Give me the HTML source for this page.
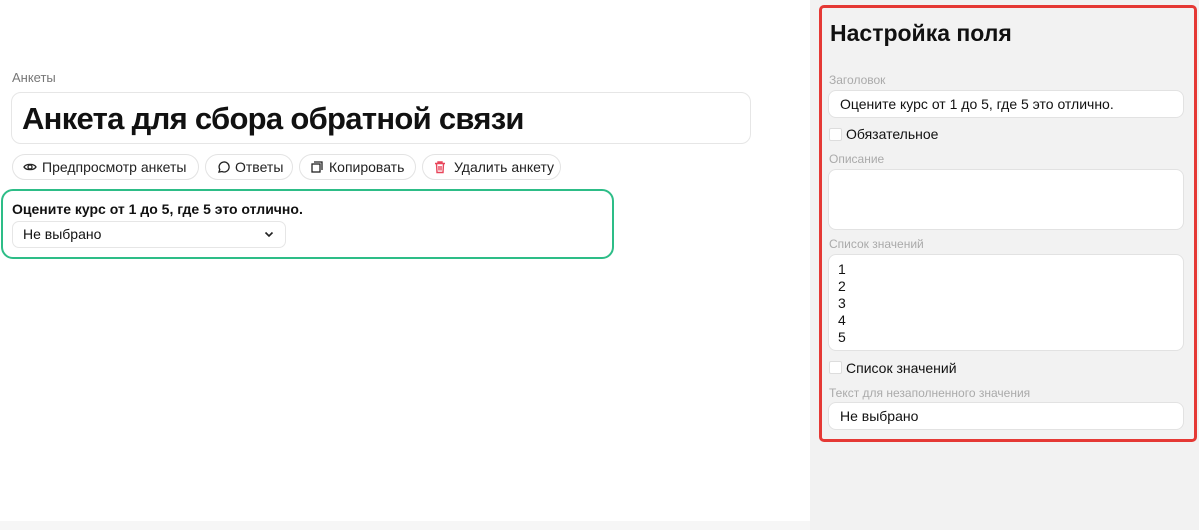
<!DOCTYPE html><html><head><meta charset="utf-8"><style>
*{box-sizing:border-box;margin:0;padding:0}
body{width:1199px;height:530px;background:#fff;font-family:"Liberation Sans","DejaVu Sans",sans-serif;position:relative;overflow:hidden;color:#111}
.a{position:absolute}
.btn{position:absolute;top:154px;height:26px;border:1px solid #e3e3e3;border-radius:13px;font-size:14px;line-height:24px;padding:0 10px;display:flex;align-items:center;gap:5px;color:#222;white-space:nowrap}
.btn svg{flex-shrink:0}
.lbl{position:absolute;left:829px;font-size:12px;color:#aaa}
.inp{position:absolute;left:828px;width:356px;background:#fff;border:1px solid #e2e2e2;border-radius:8px;font-size:14px;padding-left:11px}
.cb{position:absolute;left:829px;width:13px;height:13px;background:#fff;border:1px solid #ddd;border-radius:2px}
</style></head><body>
<div class="a" style="left:810px;top:0;width:389px;height:530px;background:#f2f2f2"></div>
<div class="a" style="left:0;top:521px;width:810px;height:9px;background:#f6f6f6"></div>
<div class="a" style="left:12px;top:70px;font-size:13px;color:#777">Анкеты</div>
<div class="a" style="left:11px;top:92px;width:740px;height:52px;border:1px solid #e6e6e6;border-radius:10px"></div>
<div class="a" style="left:22px;top:101px;font-size:31px;font-weight:bold;letter-spacing:-0.7px">Анкета для сбора обратной связи</div>
<div class="btn" style="left:12px;width:187px"><svg width="14" height="14" viewBox="0 0 14 14"><path d="M1 7C3 3.5 11 3.5 13 7C11 10.5 3 10.5 1 7Z" fill="none" stroke="#222" stroke-width="1.3"/><circle cx="7" cy="7" r="2" fill="none" stroke="#222" stroke-width="1.3"/></svg>Предпросмотр анкеты</div>
<div class="btn" style="left:205px;width:88px"><svg width="14" height="14" viewBox="0 0 14 14"><path d="M3 12L3.8 9.5A5 5 0 1 1 6 11.5Z" fill="none" stroke="#222" stroke-width="1.3"/></svg>Ответы</div>
<div class="btn" style="left:299px;width:117px"><svg width="14" height="14" viewBox="0 0 14 14"><rect x="2" y="4" width="8" height="8" fill="none" stroke="#222" stroke-width="1.3"/><path d="M4 2H12V10" fill="none" stroke="#222" stroke-width="1.3"/></svg>Копировать</div>
<div class="btn" style="left:422px;width:139px;gap:7px"><svg width="14" height="14" viewBox="0 0 14 14"><path d="M2 3.5H12M5 3.5V2H9V3.5M3.5 3.5L4 12.5H10L10.5 3.5M6 6V10.5M8 6V10.5" fill="none" stroke="#e8455a" stroke-width="1.4"/></svg>Удалить анкету</div>
<div class="a" style="left:1px;top:189px;width:613px;height:70px;border:2px solid #2dbd87;border-radius:12px"></div>
<div class="a" style="left:12px;top:201px;font-size:14px;font-weight:bold">Оцените курс от 1 до 5, где 5 это отлично.</div>
<div class="a" style="left:12px;top:221px;width:274px;height:27px;border:1px solid #e6e6e6;border-radius:7px;font-size:14px;line-height:25px;padding-left:10px">Не выбрано<svg class="a" style="left:251px;top:9px" width="10" height="7" viewBox="0 0 10 7"><path d="M1.5 1.5L5 5L8.5 1.5" fill="none" stroke="#222" stroke-width="1.6"/></svg></div>
<div class="a" style="left:819px;top:5px;width:378px;height:437px;border:3px solid #e53935;border-radius:5px"></div>
<div class="a" style="left:830px;top:20px;font-size:23px;font-weight:bold">Настройка поля</div>
<div class="lbl" style="top:73px">Заголовок</div>
<div class="inp" style="top:90px;height:28px;line-height:26px">Оцените курс от 1 до 5, где 5 это отлично.</div>
<div class="cb" style="top:128px"></div><div class="a" style="left:846px;top:126px;font-size:14px">Обязательное</div>
<div class="lbl" style="top:152px">Описание</div>
<div class="inp" style="top:169px;height:61px"></div>
<div class="lbl" style="top:237px">Список значений</div>
<div class="inp" style="top:254px;height:97px;padding-top:6px;line-height:17px;padding-left:9px">1<br>2<br>3<br>4<br>5</div>
<div class="cb" style="top:361px"></div><div class="a" style="left:846px;top:360px;font-size:14px">Список значений</div>
<div class="lbl" style="top:386px">Текст для незаполненного значения</div>
<div class="inp" style="top:402px;height:28px;line-height:26px">Не выбрано</div>
</body></html>
